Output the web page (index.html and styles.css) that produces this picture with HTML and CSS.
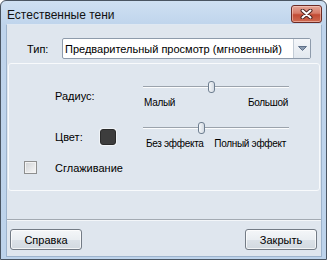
FILE: index.html
```html
<!DOCTYPE html>
<html lang="ru">
<head>
    <meta charset="UTF-8">
    <title>Естественные тени</title>
    <link rel="stylesheet" href="styles.css">
</head>
<body>

    <div class="window">
        <!-- Title bar -->
        <div class="titlebar">
            <span class="title">Естественные тени</span>
            <button class="close-btn" type="button" aria-label="Закрыть">
                <svg width="13" height="10" viewBox="0 0 13 10">
                    <path d="M2.5 1.5 L10.5 8.5 M10.5 1.5 L2.5 8.5" stroke="#4b2420" stroke-width="4" stroke-linecap="round"/>
                    <path d="M2.5 1.5 L10.5 8.5 M10.5 1.5 L2.5 8.5" stroke="#ffffff" stroke-width="2" stroke-linecap="round"/>
                </svg>
            </button>
        </div>

        <div class="client">
            <!-- Type selection -->
            <div class="type-row">
                <label class="type-label">Тип:</label>
                <div class="combo">
                    <span class="combo-text">Предварительный просмотр (мгновенный)</span>
                    <span class="combo-drop">
                        <svg width="9" height="5" viewBox="0 0 9 5">
                            <path d="M0.5 0.5 L8.5 0.5 L4.5 4.5 Z" fill="#8b9bb0" stroke="#5f7089" stroke-width="1" stroke-linejoin="round"/>
                        </svg>
                    </span>
                </div>
            </div>

            <!-- Shadow settings -->
            <div class="group">
                <div class="param-row">
                    <span class="param-label">Радиус:</span>
                    <div class="slider slider-wide">
                        <div class="slider-track"><span class="slider-thumb" style="left: 44.5%"></span></div>
                        <div class="slider-labels"><span>Малый</span><span>Большой</span></div>
                    </div>
                </div>
                <div class="param-row">
                    <span class="param-label">Цвет:</span>
                    <span class="swatch"></span>
                    <div class="slider slider-narrow">
                        <div class="slider-track"><span class="slider-thumb" style="left: 37.7%"></span></div>
                        <div class="slider-labels"><span>Без эффекта</span><span>Полный эффект</span></div>
                    </div>
                </div>
                <label class="check-row">
                    <span class="checkbox"></span>
                    <span>Сглаживание</span>
                </label>
            </div>

            <div class="separator"></div>

            <div class="buttons">
                <button type="button" class="btn">Справка</button>
                <button type="button" class="btn">Закрыть</button>
            </div>
        </div>
    </div>

</body>
</html>
```

FILE: styles.css
```css
/* Basic Styling */
html, body {
    margin: 0;
    background-color: #fff;
}
body {
    font-family: "Liberation Sans", Arial, sans-serif;
    font-size: 11px;
    color: #000;
}
/* Window frame */
.window {
    width: 327px;
    height: 260px;
    box-sizing: border-box;
    border: 1px solid #4a5562;
    border-radius: 6px 6px 0 0;
    background: linear-gradient(#cfe0f2, #bfd4ec 24px, #bdd3eb);
    padding: 0 4px 2px 5px;
    display: flex;
    flex-direction: column;
}
.titlebar {
    height: 23px;
    display: flex;
    align-items: flex-start;
    justify-content: space-between;
}
.title {
    font-size: 12px;
    line-height: 16px;
    margin-top: 6px;
    padding-left: 1px;
    color: #111;
}
.close-btn {
    width: 31px;
    height: 18px;
    margin-top: 4px;
    padding: 0;
    border: 1px solid #6b2a24;
    border-radius: 3px;
    background: linear-gradient(#e3a596, #d77b68 45%, #c24a33 55%, #cf6b52);
    box-shadow: inset 0 0 0 1px rgba(255, 220, 210, 0.5);
    display: flex;
    align-items: center;
    justify-content: center;
}
/* Client area */
.client {
    flex: 1;
    background-color: #dfe6ee;
    border: 1px solid #9db3cc;
    border-top-color: #dfe8f2;
    display: flex;
    flex-direction: column;
}
.type-row {
    display: flex;
    align-items: center;
    margin: 13px 10px 0 20px;
}
.type-label {
    width: 35px;
}
.combo {
    flex: 1;
    height: 21px;
    box-sizing: border-box;
    border: 1px solid #8e9bab;
    border-radius: 2px;
    background-color: #fff;
    display: flex;
    align-items: center;
}
.combo-text {
    flex: 1;
    padding-left: 2px;
}
.combo-drop {
    width: 16px;
    height: 19px;
    border-left: 1px solid #c3ccd6;
    background: linear-gradient(#f4f6f9, #e2e8ef);
    display: flex;
    align-items: center;
    justify-content: center;
}
/* Settings group */
.group {
    margin: 4px 1px 0 1px;
    height: 128px;
    box-sizing: border-box;
    border: 1px solid #f8fafc;
    border-radius: 3px;
    padding: 17px 0 0 15px;
}
.param-row {
    display: grid;
    grid-template-columns: 45px 43px 146px;
    align-items: center;
    margin-left: 31px;
    margin-bottom: 12px;
}
.param-label {
    grid-column: 1;
}
.swatch {
    grid-column: 2;
    width: 14px;
    height: 14px;
    border: 1px solid #2a2a2a;
    border-radius: 3px;
    background-color: #3d3d3d;
    box-shadow: 0 0 0 1px #f1f4f7;
}
.slider {
    grid-column: 3;
}
.slider-track {
    position: relative;
    height: 12px;
    margin-bottom: 3px;
}
.slider-track::before {
    content: "";
    position: absolute;
    left: 0;
    right: 0;
    top: 5px;
    height: 1px;
    background-color: #9ba3ac;
    border-bottom: 1px solid #fbfcfd;
}
.slider-thumb {
    position: absolute;
    top: 0;
    width: 5px;
    height: 10px;
    border: 1px solid #6e7e90;
    border-radius: 3px;
    background: linear-gradient(to right, #f6f8fa, #d3dae2);
}
.slider-labels {
    display: flex;
    justify-content: space-between;
    font-size: 10px;
    line-height: 14px;
    letter-spacing: -0.3px;
}
.slider-wide .slider-labels {
    padding: 0 1px;
}
.slider-narrow .slider-labels {
    padding: 0 3px;
}
.check-row {
    display: flex;
    align-items: center;
    gap: 18px;
    margin-top: -2px;
    height: 13px;
}
.checkbox {
    width: 11px;
    height: 11px;
    border: 1px solid #8e8f8f;
    background: linear-gradient(135deg, #cfd2d5, #f8f8f8);
    box-shadow: inset 0 0 0 1px #f3f3f3;
}
.separator {
    margin-top: 28px;
    height: 1px;
    background-color: #a3aab2;
    border-bottom: 1px solid #f3f6f9;
}
/* Buttons */
.buttons {
    display: flex;
    justify-content: space-between;
    margin: 8px 4px 0 3px;
}
.btn {
    width: 72px;
    height: 21px;
    padding: 0;
    font-family: inherit;
    font-size: 11px;
    color: #000;
    border: 1px solid #737b85;
    border-radius: 3px;
    background: linear-gradient(#f4f6f8, #eaeef2 50%, #dce2e8 50%, #d2d9e0);
    box-shadow: inset 0 0 0 1px rgba(255, 255, 255, 0.7);
}
```
